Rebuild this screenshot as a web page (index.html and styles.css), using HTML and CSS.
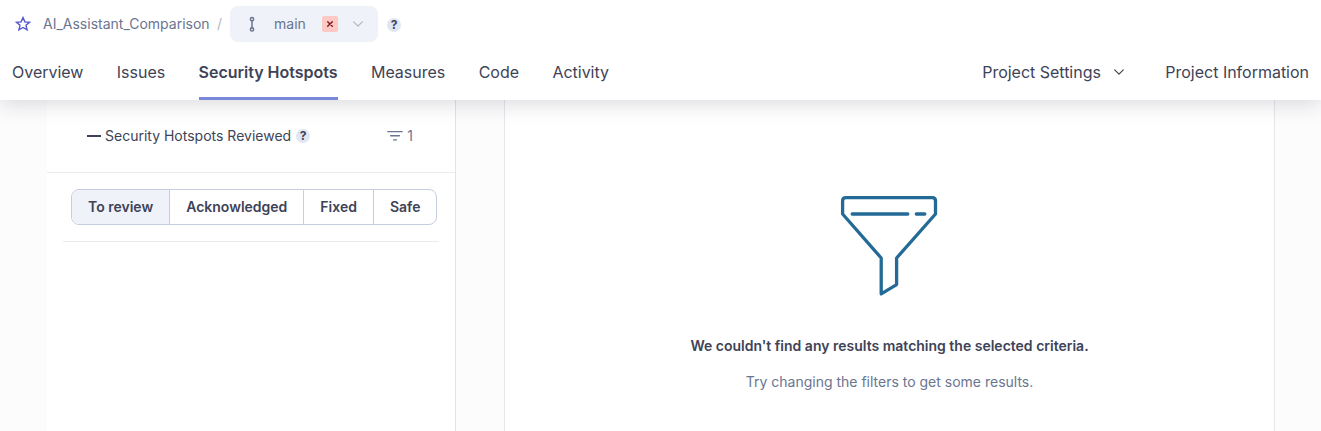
FILE: index.html
```html
<!DOCTYPE html>
<html lang="en">
<head>
<meta charset="utf-8">
<title>Security Hotspots</title>
<link rel="stylesheet" href="styles.css">
</head>
<body>
<header class="header">
  <div class="crumbs">
    <svg class="star" width="16" height="16" viewBox="0 0 16 16"><path d="M8 1.6 L9.9 5.9 L14.5 6.3 L11 9.3 L12.1 13.9 L8 11.5 L3.9 13.9 L5 9.3 L1.5 6.3 L6.1 5.9 Z"/></svg>
    <a class="project">AI_Assistant_Comparison</a>
    <span class="slash">/</span>
    <div class="branch">
      <svg class="branch-icon" width="8" height="16" viewBox="0 0 8 16"><circle cx="4" cy="3.2" r="1.6"/><circle cx="4" cy="13.4" r="1.6"/><path d="M4 4.8V11.8"/></svg>
      <span class="branch-name">main</span>
      <span class="gate"><svg width="16" height="16" viewBox="0 0 16 16"><path d="M5.7 5.7L10.3 10.3M10.3 5.7L5.7 10.3"/></svg></span>
      <svg class="chevron" width="12" height="8" viewBox="0 0 12 8"><path d="M1.7 1.8L6 6.1L10.3 1.8"/></svg>
    </div>
    <span class="help">?</span>
  </div>
  <nav class="nav">
    <a class="tab">Overview</a>
    <a class="tab">Issues</a>
    <a class="tab active">Security Hotspots</a>
    <a class="tab">Measures</a>
    <a class="tab">Code</a>
    <a class="tab">Activity</a>
    <a class="tab settings">Project Settings <svg class="chevron" width="12" height="8" viewBox="0 0 12 8"><path d="M1.7 1.8L6 6.1L10.3 1.8"/></svg></a>
    <a class="tab">Project Information</a>
  </nav>
</header>
<main class="content">
  <aside class="sidebar">
    <div class="reviewed">
      <span class="dash"></span>
      <span class="label">Security Hotspots Reviewed</span>
      <span class="help">?</span>
      <span class="filter"><svg width="16" height="12" viewBox="0 0 16 12"><path d="M.8 1.6H15.2M3.6 5.8H12.4M6.6 9.9H9.4"/></svg>1</span>
    </div>
    <div class="status">
      <div class="toggle">
        <span class="option selected">To review</span>
        <span class="option">Acknowledged</span>
        <span class="option">Fixed</span>
        <span class="option">Safe</span>
      </div>
    </div>
  </aside>
  <section class="results">
    <svg class="funnel" width="100" height="104" viewBox="0 0 100 104"><path d="M5.5 3.7H92.3Q95.5 3.7 95.5 6.9V20L56.6 64V90.6L41.2 99.8V64L2.6 20V6.9Q2.6 3.7 5.8 3.7ZM12.2 20H67.8M76.3 20H84.8"/></svg>
    <p class="title">We couldn't find any results matching the selected criteria.</p>
    <p class="hint">Try changing the filters to get some results.</p>
  </section>
</main>
</body>
</html>
```
FILE: styles.css
```css
* { box-sizing: border-box; }
body {
  margin: 0;
  height: 431px;
  overflow: hidden;
  background: #fcfcfd;
  color: #3e4357;
  font: 14px/20px Inter, sans-serif;
}
svg { display: block; fill: none; flex: none; stroke-linecap: round; stroke-linejoin: round; }
.header {
  position: relative;
  z-index: 1;
  height: 100px;
  padding-top: 6px;
  background: #fff;
  box-shadow: 0 4px 20px rgba(29, 33, 47, .16);
}
.crumbs { display: flex; align-items: center; height: 36px; padding-left: 15px; color: #6a7590; }
.star { stroke: #5256c9; stroke-width: 1.4; stroke-linejoin: miter; }
.project { width: 167px; margin-left: 12px; white-space: nowrap; }
.slash { width: 6px; margin: 0 7px 0 7px; color: #b3b7c4; }
.branch {
  display: flex;
  align-items: center;
  width: 148px;
  height: 36px;
  margin-right: 9px;
  padding-left: 18px;
  border-radius: 8px;
  background: #eff2f9;
}
.branch-icon { stroke: #6a7590; stroke-width: 1.5; }
.branch-name { width: 32px; margin: 0 16px 0 18px; }
.gate { margin-right: 14px; border-radius: 2px; background: #fec8c5; }
.gate svg { stroke: #801b14; stroke-width: 1.4; }
.branch .chevron { stroke: #b0b6c8; }
.chevron { stroke: #3e4357; stroke-width: 1.2; }
.help {
  width: 14px;
  height: 14px;
  border-radius: 50%;
  background: #e1e6f3;
  color: #3e4357;
  font-size: 12px;
  font-weight: 700;
  line-height: 14px;
  text-align: center;
}
.crumbs .help { margin-top: 2px; }
.nav { display: flex; gap: 33.4px; height: 58px; padding: 0 12px; font-size: 16px; letter-spacing: -.01px; }
.tab { display: flex; align-items: center; padding-top: 5px; border-bottom: 3px solid transparent; white-space: nowrap; }
.active { border-color: #7b87d9; font-weight: 600; }
.settings { gap: 12px; margin-left: auto; margin-right: 7px; }
.content { display: flex; height: 331px; padding-left: 47px; }
.sidebar { width: 409px; margin-right: 48px; border-right: 1px solid #e1e3ea; background: #fff; }
.reviewed { display: flex; align-items: center; height: 73px; padding: 0 42px 0 40px; border-bottom: 1px solid #ebebeb; }
.dash { width: 14px; height: 2px; margin-right: 4px; background: #3e4357; }
.label { margin-right: 5px; white-space: nowrap; }
.filter { display: flex; align-items: center; gap: 4px; margin-left: auto; color: #6a7590; }
.filter svg { stroke: #6a7590; stroke-width: 1.4; }
.status { height: 69px; margin: 0 16px; padding: 16px 0 0 8px; border-bottom: 1px solid #ebebeb; }
.toggle { display: inline-flex; height: 36px; border: 1px solid #c5cddf; border-radius: 8px; overflow: hidden; }
.option { padding: 7px 16px; border-right: 1px solid #c5cddf; font-weight: 600; }
.option:last-child { border-right: 0; }
.selected { background: #eff2f9; }
.results {
  display: flex;
  flex-direction: column;
  align-items: center;
  width: 771px;
  padding-top: 94px;
  border: solid #e6e7eb;
  border-width: 0 1px;
  background: #fff;
}
.funnel { stroke: #236a97; stroke-width: 3.3; }
.results p { margin: 0; }
.title { padding-top: 38px; font-weight: 600; }
.hint { padding-top: 16px; color: #6a7590; }
```
